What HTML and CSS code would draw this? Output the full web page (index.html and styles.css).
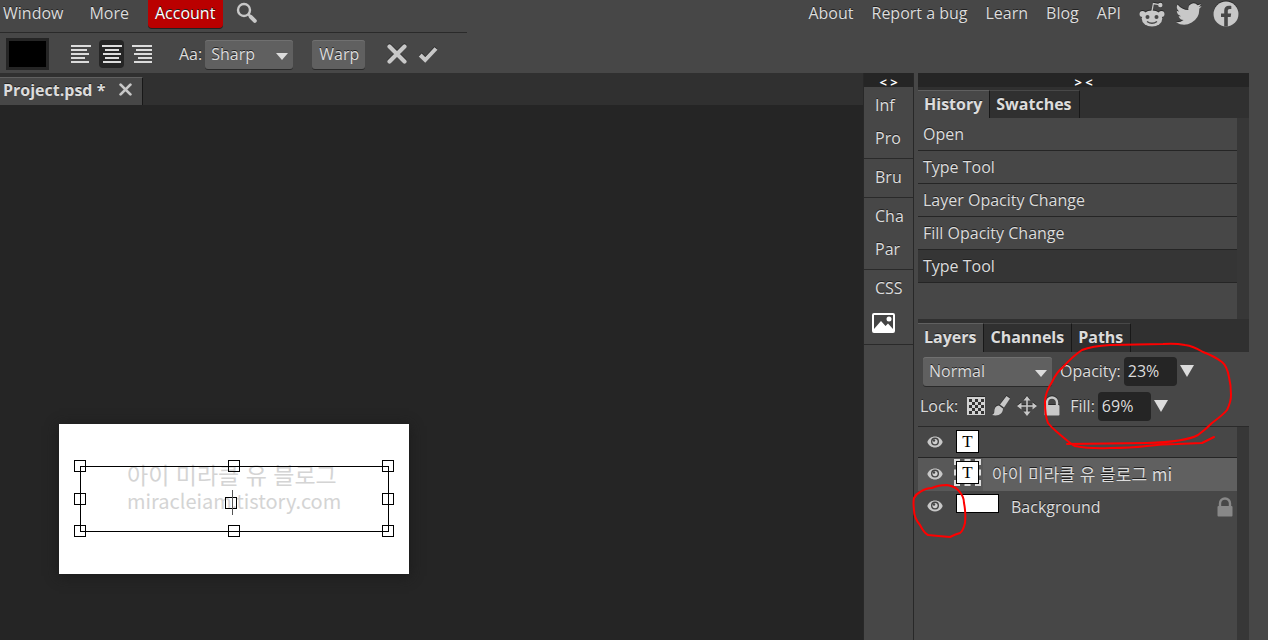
FILE: index.html
```html
<!DOCTYPE html>
<html lang="en">
<head>
<meta charset="utf-8">
<title>Project.psd</title>
<link rel="stylesheet" href="styles.css">
</head>
<body>
<svg class="defs" aria-hidden="true">
  <symbol id="eye" viewBox="0 0 16 12"><path d="M8 0.5C4.500.5 1.500 2.700.3 6c1.200 3.300 4.200 5.500 7.700 5.500s6.500-2.200 7.700-5.500C14.500 2.700 11.500.5 8 .5z" fill="#c8c8c8"/><circle cx="8" cy="5.600" r="4" fill="#444"/><circle cx="8" cy="5.600" r="2.600" fill="#d0d0d0"/><circle cx="7" cy="4.500" r="1.200" fill="#444"/></symbol>
  <symbol id="lock" viewBox="0 0 16 20"><path d="M3 10V6.500a5 5 0 0 1 10 0V10" fill="none" stroke="currentColor" stroke-width="2.400"/><rect x="0.500" y="9" width="15" height="10.500" rx="1" fill="currentColor"/></symbol>
  <symbol id="cross" viewBox="0 0 20 20"><path d="M2.500 2.500l15 15M17.500 2.500l-15 15" stroke="currentColor" stroke-width="4.200" stroke-linecap="round"/></symbol>
</svg>

<header class="topbar">
  <div class="bars">
    <nav class="menu">
      <button class="menu-item">Window</button>
      <button class="menu-item">More</button>
      <button class="menu-item account">Account</button>
      <button class="menu-item search" aria-label="Search"><svg width="22" height="22" viewBox="0 0 22 22"><circle cx="8" cy="8" r="6" fill="none" stroke="#c8c8c8" stroke-width="2.400"/><path d="M12.500 12.500l2 2" stroke="#c8c8c8" stroke-width="2.500"/><path d="M14.800 14.800l4 4" stroke="#c8c8c8" stroke-width="4" stroke-linecap="round"/></svg></button>
    </nav>
    <div class="options">
      <button class="swatch" aria-label="Text color"></button>
      <div class="aligns">
        <button class="align" aria-label="Align left"><svg width="20" height="20" viewBox="0 0 20 20"><path d="M0 1h20M0 5h16M0 9h18M0 13h14M0 17h18" /></svg></button>
        <button class="align on" aria-label="Align center"><svg width="20" height="20" viewBox="0 0 20 20"><path d="M0 1h20M3 5h14M1 9h18M3 13h14M1 17h18" /></svg></button>
        <button class="align" aria-label="Align right"><svg width="20" height="20" viewBox="0 0 20 20"><path d="M0 1h20M4 5h16M2 9h18M6 13h14M2 17h18" /></svg></button>
      </div>
      <label class="aa" for="aa">Aa:</label>
      <span class="drop sharp"><select id="aa"><option>Sharp</option></select></span>
      <button class="warp">Warp</button>
      <button class="icon cancel" aria-label="Cancel"><svg width="20" height="20"><use href="#cross"/></svg></button>
      <button class="icon confirm" aria-label="Confirm"><svg width="20" height="17" viewBox="0 0 20 17"><path d="M2.200 9l5 5L18 2.500" fill="none" stroke="currentColor" stroke-width="4"/></svg></button>
    </div>
  </div>
  <nav class="links">
    <a href="#">About</a>
    <a href="#">Report a bug</a>
    <a href="#">Learn</a>
    <a href="#">Blog</a>
    <a href="#">API</a>
    <a href="#" class="social" aria-label="Reddit"><svg width="26" height="26" viewBox="0 0 26 26"><g fill="#c8c8c8"><ellipse cx="13" cy="17.500" rx="10.300" ry="8"/><circle cx="3.500" cy="13" r="3"/><circle cx="22.500" cy="13" r="3"/><circle cx="21.300" cy="4" r="2.200"/></g><path d="M13 10l1.400-7.500 5.500 1.200" fill="none" stroke="#c8c8c8" stroke-width="1.300"/><circle cx="8.500" cy="16" r="2" fill="#474747"/><circle cx="17.500" cy="16" r="2" fill="#474747"/><path d="M8 20.500q5 3.500 10 0" fill="none" stroke="#474747" stroke-width="1.400"/></svg></a>
    <a href="#" class="social" aria-label="Twitter"><svg width="26" height="26" viewBox="0 0 24 24"><path fill="#c8c8c8" d="M23.600 4.600a9.900 9.900 0 0 1-2.800.8 4.900 4.900 0 0 0 2.200-2.700c-1 .6-2 1-3.100 1.200a4.900 4.900 0 0 0-8.400 4.500A13.900 13.900 0 0 1 1.400 3.200a4.900 4.900 0 0 0 1.500 6.500 4.900 4.900 0 0 1-2.200-.6c0 2.300 1.600 4.400 3.900 4.900a5 5 0 0 1-2.200.1 4.900 4.900 0 0 0 4.600 3.400A9.900 9.900 0 0 1 0 19.500a14 14 0 0 0 21.500-12.400c.8-.7 1.500-1.500 2.100-2.500z"/></svg></a>
    <a href="#" class="social" aria-label="Facebook"><svg width="26" height="26" viewBox="0 0 26 26"><circle cx="13" cy="13" r="12.500" fill="#c8c8c8"/><path fill="#474747" d="M11.200 25.500V16H8v-3.600h3.200V9.600c0-3.200 1.900-4.900 4.700-4.900 1.400 0 2.400.2 2.400.2v3h-1.500c-1.500 0-2 .9-2 1.900v2.600h3.400l-.6 3.600h-2.800v9.500z"/></svg></a>
  </nav>
</header>

<main class="main">
  <section class="work">
    <div class="doc-tabs">
      <div class="doc-tab"><span>Project.psd *</span><button class="close" aria-label="Close"><svg width="13" height="13"><use href="#cross"/></svg></button></div>
    </div>
    <div class="stage">
      <div class="doc">
        <div class="doc-text"><p class="ko" lang="ko">아이 미라클 유 블로그</p><p class="en">miracleiam.tistory.com</p></div>
        <svg class="handles" viewBox="0 0 350 150" fill="none" stroke="#000" shape-rendering="crispEdges">
          <rect x="21.500" y="42.500" width="308" height="65"/>
          <path d="M15.500 36.500h11v11h-11zM169.500 36.500h11v11h-11zM323.500 36.500h11v11h-11zM15.500 69.500h11v11h-11zM323.500 69.500h11v11h-11zM15.500 101.500h11v11h-11zM169.500 101.500h11v11h-11zM323.500 101.500h11v11h-11zM166.500 73.500h11v11h-11z"/>
          <path d="M173.500 66v25" stroke="#555"/>
        </svg>
      </div>
    </div>
  </section>

  <aside class="rail">
    <button class="toggle">&lt; &gt;</button>
    <div class="group"><button>Inf</button><button>Pro</button></div>
    <div class="group"><button>Bru</button></div>
    <div class="group"><button>Cha</button><button>Par</button></div>
    <div class="group"><button>CSS</button><button class="pic" aria-label="Image"><svg width="23" height="20" viewBox="0 0 23 20"><rect x="1" y="1" width="21" height="18" rx="1" fill="#444" stroke="#fff" stroke-width="2"/><path d="M2 16l7-8 4.500 5 2.500-2.500 5 5.500v2H2z" fill="#fff"/><circle cx="17" cy="6" r="2.500" fill="#fff"/></svg></button></div>
  </aside>

  <aside class="panels">
    <button class="toggle">&gt; &lt;</button>
    <section>
      <div class="tabs"><button class="tab on">History</button><button class="tab">Swatches</button></div>
      <ol class="history">
        <li>Open</li>
        <li>Type Tool</li>
        <li>Layer Opacity Change</li>
        <li>Fill Opacity Change</li>
        <li class="current">Type Tool</li>
      </ol>
    </section>
    <section class="layers">
      <div class="tabs"><button class="tab on">Layers</button><button class="tab">Channels</button><button class="tab">Paths</button></div>
      <div class="controls">
        <div class="line">
          <span class="drop blend"><select aria-label="Blend mode"><option>Normal</option></select></span>
          <label for="opacity">Opacity:</label><input id="opacity" value="23%"><button class="down" aria-label="Opacity slider"></button>
        </div>
        <div class="line locks">
          <span class="lock-label">Lock:</span>
          <button class="icon" aria-label="Lock transparency"><svg width="18" height="18" viewBox="0 0 18 18" shape-rendering="crispEdges"><rect width="18" height="18" fill="#d2d2d2"/><path d="M2 2h3v3H2zM8 2h3v3H8zM14 2h3v3h-3zM5 5h3v3H5zM11 5h3v3h-3zM2 8h3v3H2zM8 8h3v3H8zM14 8h3v3h-3zM5 11h3v3H5zM11 11h3v3h-3zM2 14h3v3H2zM8 14h3v3H8zM14 14h3v3h-3z" fill="#333"/></svg></button>
          <button class="icon" aria-label="Lock pixels"><svg width="18" height="20" viewBox="0 0 18 20"><path d="M14.500 0L18 2.500l-6 9L8 8.500z" fill="currentColor"/><path d="M7 9.500l4 3c0 5-4 8-11 6.500 3-1.500 2-3 2.500-5.500.5-2.500 2.500-4 4.500-4z" fill="currentColor"/></svg></button>
          <button class="icon" aria-label="Lock position"><svg width="20" height="20" viewBox="0 0 20 20"><path d="M10 2v16M2 10h16" stroke="currentColor" stroke-width="1.600"/><path d="M10 0l3.500 4.500h-7zM10 20l3.500-4.500h-7zM0 10l4.500-3.500v7zM20 10l-4.500-3.500v7z" fill="currentColor"/></svg></button>
          <button class="icon" aria-label="Lock all"><svg width="16" height="20"><use href="#lock"/></svg></button>
          <label class="fill-label" for="fill">Fill:</label><input id="fill" value="69%"><button class="down" aria-label="Fill slider"></button>
        </div>
      </div>
      <ul class="layer-list">
        <li><button class="eye" aria-label="Toggle visibility"><svg width="16" height="12"><use href="#eye"/></svg></button><span class="thumb text">T</span></li>
        <li class="selected"><button class="eye" aria-label="Toggle visibility"><svg width="16" height="12"><use href="#eye"/></svg></button><span class="thumb text">T</span><span class="name" lang="ko">아이 미라클 유 블로그 mi</span></li>
        <li class="bg"><button class="eye" aria-label="Toggle visibility"><svg width="16" height="12"><use href="#eye"/></svg></button><span class="thumb wide"></span><span class="name">Background</span><svg class="locked" width="16" height="20"><use href="#lock"/></svg></li>
      </ul>
    </section>
    <svg class="marks" viewBox="918 337 331 200" fill="none" stroke="#f00" stroke-width="2" stroke-linecap="round" stroke-linejoin="round" aria-hidden="true">
      <path d="M1067 444L1147 443Q1185 442 1198 435Q1205 430 1212 423Q1224 414 1227 410Q1231 402 1231 395Q1231 385 1229 377Q1227 366 1222 362Q1214 356 1203 352Q1193 346 1185 345Q1175 343 1163 344L1110 345Q1092 346 1082 350Q1073 356 1063 367Q1056 373 1052 382Q1045 393 1045 402Q1045 416 1048 423Q1051 427 1057 432Q1072 445 1075 446Q1090 449 1110 448Q1130 448 1147 446Q1162 444 1177 444L1202 443L1214 437"/>
      <path d="M932 488Q938 485 947 485Q954 486 958 490Q964 496 964 503Q966 513 965 523Q963 531 960 533Q956 534 950 537Q938 536 928 535Q924 533 920 525Q914 518 914 510Q913 502 914 498Q916 494 920 492Q926 488 932 488"/>
    </svg>
  </aside>
</main>
</body>
</html>
```

FILE: styles.css
```css
* { box-sizing: border-box; }
body {
  margin: 0;
  min-height: 100vh;
  display: flex;
  flex-direction: column;
  overflow: hidden;
  background: #474747;
  color: #dcdcdc;
  font: 16px/24px "Open Sans", "Noto Sans CJK KR", sans-serif;
  text-shadow: 0 -1px 0 #222;
}
button, input, select {
  font: inherit;
  color: inherit;
  text-shadow: inherit;
  border: 0;
  padding: 0;
  margin: 0;
  background: none;
}
svg { display: block; }
ol, ul, p { margin: 0; padding: 0; list-style: none; }
.defs { position: absolute; width: 0; height: 0; }

.topbar { display: flex; justify-content: space-between; height: 73px; }
.bars { width: 467px; }
.menu { display: flex; height: 33px; border-bottom: 1px solid #2a2a2a; }
.menu-item { height: 28px; padding: 0 13px 2px; }
.menu-item:first-child { padding-left: 3px; }
.menu-item.account {
  margin-left: 6px;
  padding: 0 8px 2px 7px;
  background: #ba0000;
  color: #fff;
  border-radius: 0 0 4px 4px;
  box-shadow: 0 1px 0 #222;
}
.options { display: flex; align-items: center; height: 40px; padding: 2px 0 0 6px; }
.swatch { width: 43px; height: 32px; background: #000; border: 3px solid #252525; }
.aligns { display: flex; gap: 4px; margin-left: 18px; }
.align { width: 28px; height: 28px; padding: 5px 4px 3px; stroke: #dcdcdc; stroke-width: 2; }
.align.on { width: 25px; padding: 5px 2px 3px 3px; background: #252525; border-radius: 4px; }
.aa { margin: 0 3px 0 23px; }
.drop { position: relative; display: block; }
.drop select {
  display: block;
  appearance: none;
  width: 100%;
  height: 29px;
  padding: 0 6px 1px;
  background: #606060;
  border-radius: 3px;
  box-shadow: 0 1px 0 #2a2a2a, inset 0 1px 0 #707070;
}
.drop::after {
  content: "";
  position: absolute;
  right: 5px;
  top: 13px;
  border: 6px solid transparent;
  border-top: 7px solid #dcdcdc;
  border-bottom: 0;
}
.sharp { width: 88px; }
.blend { width: 129px; }
.warp {
  height: 29px;
  margin-left: 19px;
  padding: 0 6px 1px 7px;
  background: #606060;
  border-radius: 3px;
  box-shadow: 0 1px 0 #2a2a2a, inset 0 1px 0 #707070;
}
.icon { color: #c8c8c8; }
.icon svg, .social svg { filter: drop-shadow(0 -1px 0 #2a2a2a); }
.cancel { margin-left: 22px; }
.confirm { margin-left: 11px; }
.links { display: flex; gap: 18px; padding: 1px 36px 0 0; }
.links a { color: inherit; text-decoration: none; }
.links .social { margin-right: -7px; }

.main { flex: 1; display: flex; padding-right: 19px; }
.work { flex: 1; display: flex; flex-direction: column; }
.doc-tabs { display: flex; height: 32px; background: #303030; padding-top: 4px; }
.doc-tab {
  display: flex;
  align-items: center;
  gap: 14px;
  padding: 0 10px 4px 3px;
  background: #474747;
  border-top: 1px solid #606060;
  border-right: 1px solid #181818;
  font-weight: 700;
}
.close { color: #c8c8c8; }
.stage { position: relative; flex: 1; background: #252525; }
.doc {
  position: absolute;
  left: 59px;
  top: 319px;
  width: 350px;
  height: 150px;
  padding: 36px 0 0 68px;
  background: #fff;
  box-shadow: 0 2px 12px #1a1a1a;
}
.doc-text { color: #d4d4d4; text-shadow: none; font-family: "Noto Sans CJK KR", sans-serif; white-space: nowrap; }
.ko { font-size: 23px; line-height: 28px; }
.en { font-size: 20px; line-height: 26px; }
.handles { position: absolute; inset: 0; width: 100%; height: 100%; }

.rail {
  width: 51px;
  display: flex;
  flex-direction: column;
  border: 1px solid #282828;
  border-width: 0 1px;
}
.toggle {
  height: 14px;
  width: 100%;
  padding-top: 4px;
  background: #252525;
  color: #fff;
  font-size: 13px;
  line-height: 10px;
  font-weight: 700;
  text-shadow: none;
}
.group { display: flex; flex-direction: column; padding: 2px 0 3px; border-bottom: 1px solid #2a2a2a; }
.group button { height: 33px; padding: 0 0 1px 11px; text-align: left; }
.group .pic { height: 36px; padding: 0 0 0 8px; }

.panels { position: relative; width: 331px; margin-left: 4px; display: flex; flex-direction: column; }
.tabs { display: flex; background: #303030; padding-top: 3px; }
.tab {
  height: 28px;
  padding: 0 7px 1px 6px;
  border-top: 1px solid #484848;
  border-right: 1px solid #181818;
  font-weight: 700;
}
.tab.on { background: #474747; border-top-color: #606060; }
.history { height: 201px; border-right: 12px solid #373737; }
.history li { height: 33px; padding: 4px 5px 0; border-bottom: 1px solid #252525; }
.history .current { background: #353535; }
.layers { flex: 1; display: flex; flex-direction: column; }
.layers .tabs { padding-top: 4px; }
.layers .tab { height: 29px; padding-bottom: 2px; }
.controls { height: 75px; padding-top: 4px; border-bottom: 1px solid #2a2a2a; }
.line { display: flex; align-items: center; height: 30px; padding-left: 5px; }
.line label { margin: 0 3px 0 8px; }
.line input { width: 53px; height: 29px; padding: 0 4px; background: #252525; border-radius: 4px; }
.down {
  width: 0;
  height: 0;
  margin-left: 3px;
  border: 7px solid transparent;
  border-top: 12px solid #dcdcdc;
  border-bottom: 0;
}
.locks { margin-top: 5px; padding-left: 2px; gap: 7px; }
.lock-label { margin-right: 2px; }
.locks label { margin: 0 -4px 0 3px; }
.locks .down { margin-left: -4px; }
.layer-list { flex: 1; border-right: 12px solid #373737; }
.layer-list li { display: flex; align-items: flex-start; height: 33px; }
.layer-list li:first-child { height: 31px; border-bottom: 1px solid #252525; }
.eye { width: 39px; height: 31px; padding: 0 0 2px 9px; }
.thumb { width: 23px; height: 23px; margin: 3px 4px 0 -1px; background: #fff; border: 1px solid #000; color: #000; }
.thumb.text { font: 17px/21px "Liberation Serif", serif; text-align: center; text-shadow: none; }
.layer-list .selected { background: linear-gradient(to right, #585858 65px, #606060 65px); }
.selected .eye { padding-bottom: 0; }
.selected .thumb { outline: 2px dashed #ddd; outline-offset: 0; }
.selected .name { margin: 4px 0 0 9px; font-family: "Noto Sans CJK KR", sans-serif; font-size: 17px; }
.thumb.wide { width: 43px; height: 19px; }
.bg .name { margin: 4px auto 0 8px; }
.locked { margin: 6px 4px 0 0; color: #888; }
.marks { position: absolute; left: 0; top: 264px; width: 331px; height: 200px; overflow: visible; }
```
